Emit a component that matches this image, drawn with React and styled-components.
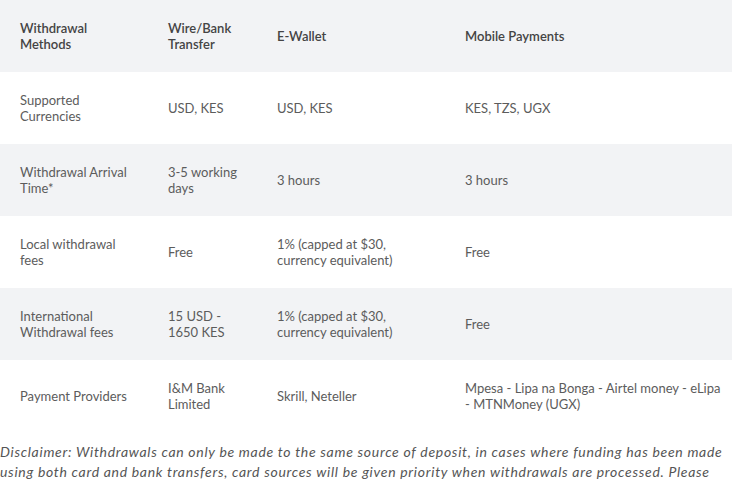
import React from "react";
import styled, { createGlobalStyle } from "styled-components";

const Global = createGlobalStyle`
  html, body { margin: 0; padding: 0; background: #fff; }
  body { font-family: Lato, "Open Sans", sans-serif; overflow: hidden; }
`;

const Table = styled.table`
  width: 732px;
  border-collapse: collapse;
  table-layout: fixed;
`;

const Row = styled.tr`
  height: 72px;
  background: ${(p) => (p.$shaded ? "#f2f3f5" : "#ffffff")};
`;

const Head = styled.th`
  text-align: left;
  vertical-align: middle;
  padding: 0 20px;
  font-size: 13px;
  line-height: 16px;
  font-weight: 600;
  color: #444;
`;

const Cell = styled.td`
  vertical-align: middle;
  padding: 0 ${(p) => (p.$last ? "8px" : "20px")} 0 20px;
  font-size: 13px;
  line-height: 16px;
  font-weight: 400;
  color: #5c5c5c;
`;

const Disclaimer = styled.p`
  margin: 10px 0 0;
  font-size: 14px;
  line-height: 20px;
  letter-spacing: 0.7px;
  font-style: italic;
  color: #555;
`;

const widths = [148, 109, 188, 287];

const rows = [
  ["Supported Currencies", "USD, KES", "USD, KES", "KES, TZS, UGX"],
  ["Withdrawal Arrival Time*", "3-5 working days", "3 hours", "3 hours"],
  ["Local withdrawal fees", "Free", "1% (capped at $30, currency equivalent)", "Free"],
  ["International Withdrawal fees", "15 USD - 1650 KES", "1% (capped at $30, currency equivalent)", "Free"],
  ["Payment Providers", "I&M Bank Limited", "Skrill, Neteller", "Mpesa - Lipa na Bonga - Airtel money - eLipa - MTNMoney (UGX)"],
];

export default function App() {
  return (
    <>
      <Global />
      <Table>
        <colgroup>
          {widths.map((w, i) => (
            <col key={i} style={{ width: w }} />
          ))}
        </colgroup>
        <thead>
          <Row $shaded>
            <Head>Withdrawal Methods</Head>
            <Head>Wire/Bank Transfer</Head>
            <Head>E-Wallet</Head>
            <Head>Mobile Payments</Head>
          </Row>
        </thead>
        <tbody>
          {rows.map((r, i) => (
            <Row key={i} $shaded={i % 2 === 1}>
              {r.map((c, j) => (
                <Cell key={j} $last={j === 3}>{c}</Cell>
              ))}
            </Row>
          ))}
        </tbody>
      </Table>
      <Disclaimer>
        Disclaimer: Withdrawals can only be made to the same source of deposit, in cases where funding has been made using both card and bank transfers, card sources will be given priority when withdrawals are processed. Please
      </Disclaimer>
    </>
  );
}
